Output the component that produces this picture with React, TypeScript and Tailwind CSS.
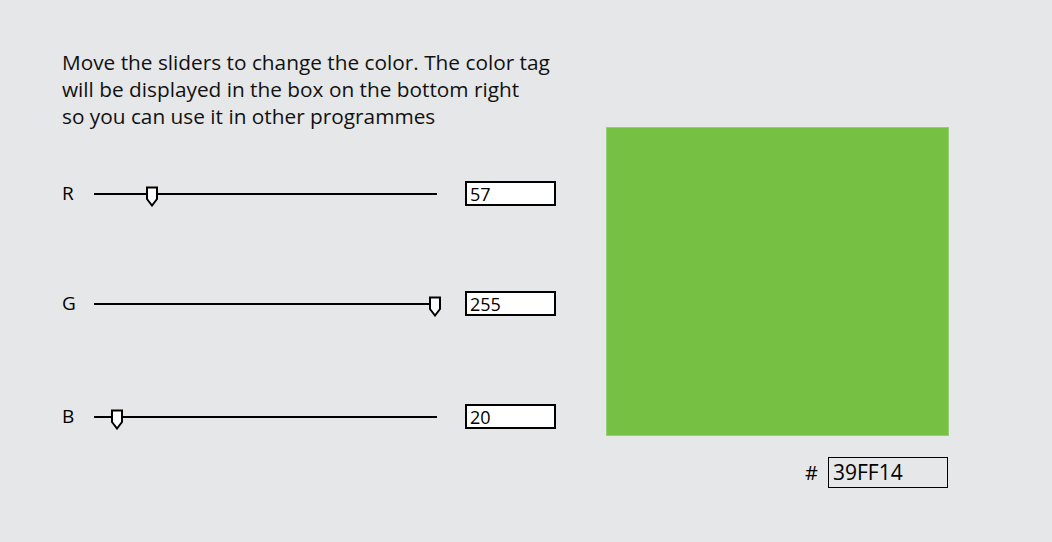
import React from "react";

const font = { fontFamily: '"Open Sans", "Noto Sans", Arial, sans-serif' };

function Thumb() {
  return (
    <svg width="14" height="21" viewBox="0 0 14 21" className="block">
      <path d="M2 1.5 H12 V13 L7 19.5 L2 13 Z" fill="#ffffff" stroke="#000" strokeWidth="2" strokeLinejoin="miter" />
    </svg>
  );
}

function SliderRow({ label, value, thumbLeft, mt }: { label: string; value: string; thumbLeft: number; mt: string }) {
  return (
    <div className={`flex items-center h-[25px] ${mt}`}>
      <div className="w-[32px] text-[19px] text-black leading-none">{label}</div>
      <div className="relative w-[343px] h-[25px] flex items-center">
        <div className="w-full h-[2px] bg-black mt-[1px]" />
        <div className="absolute top-[5px]" style={{ left: thumbLeft }}>
          <Thumb />
        </div>
      </div>
      <div className="ml-[28px] w-[91px] h-[25px] bg-white border-2 border-black flex items-center pl-[3px] text-[18px] leading-none text-black">
        {value}
      </div>
    </div>
  );
}

export default function App() {
  return (
    <div className="w-[1052px] h-[542px] bg-[#E6E7E8] flex" style={font}>
      <div className="w-[544px] ml-[62px] pt-[49px] flex flex-col">
        <p className="text-[20.8px] leading-[27px] text-[#111] whitespace-nowrap">
          Move the sliders to change the color. The color tag
          <br />
          will be displayed in the box on the bottom right
          <br />
          so you can use it in other programmes
        </p>
        <SliderRow label="R" value="57" thumbLeft={51} mt="mt-[51px]" />
        <SliderRow label="G" value="255" thumbLeft={334} mt="mt-[85px]" />
        <SliderRow label="B" value="20" thumbLeft={16} mt="mt-[88px]" />
      </div>
      <div className="pt-[127px] flex flex-col items-end">
        <div className="w-[343px] h-[309px] bg-[#76C044] border border-[#96cf73]" />
        <div className="mt-[21px] mr-[1px] flex items-center">
          <span className="text-[20px] leading-none text-black mr-[10px]">#</span>
          <div className="w-[120px] h-[31px] border-[1.5px] border-black flex items-center pl-[4px] text-[21px] leading-none text-black">
            39FF14
          </div>
        </div>
      </div>
    </div>
  );
}
